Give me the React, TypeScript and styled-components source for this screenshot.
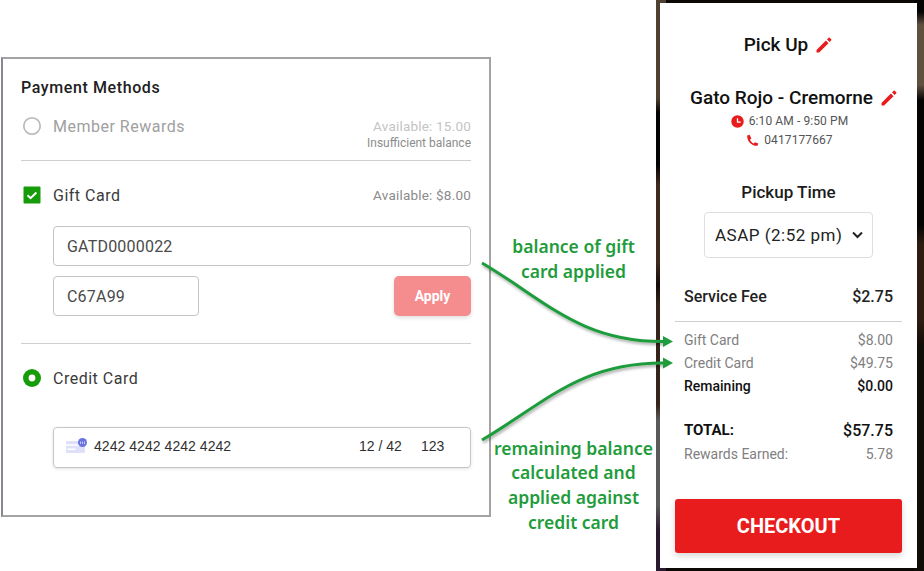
import React from "react";
import styled, { createGlobalStyle } from "styled-components";

const Global = createGlobalStyle`
  html, body { margin: 0; padding: 0; background: #fff; }
  body { font-family: Roboto, "Liberation Sans", sans-serif; width: 924px; height: 571px; overflow: hidden; }
`;
const Page = styled.div`
  position: relative; display: flex; width: 924px; height: 571px; overflow: hidden;
`;
const PaymentPanel = styled.section`
  box-sizing: border-box; width: 490px; height: 460px; margin-top: 57px; margin-left: 1px;
  border: 2px solid #a3a3a3; border-left-color: #8a8590; background: #fff; padding: 18px 18px 0 18px;
  display: flex; flex-direction: column; flex: none;
`;
const PanelTitle = styled.h2`
  margin: 0; font-size: 16px; line-height: 22px; font-weight: 500; color: #212121; letter-spacing: .6px;
`;
const RewardsBlock = styled.div`
  display: flex; justify-content: space-between; align-items: flex-start; height: 51px; margin-top: 10px;
`;
const OptionRow = styled.div<{ $top: number }>`
  display: flex; align-items: center; margin-top: ${p => p.$top}px; height: 34px; gap: 11px; padding-left: 1px;
`;
const OptionMark = styled.span`
  width: 20px; height: 20px; flex: none; display: block;
`;
const OptionLabel = styled.span<{ $muted?: boolean }>`
  font-size: 16px; color: ${p => p.$muted ? "#a0a0a0" : "#3a3a3a"}; letter-spacing: .5px; flex: 1;
`;
const Availability = styled.div`
  display: flex; flex-direction: column; align-items: flex-end; text-align: right; padding-top: 9px;
`;
const Avail = styled.span<{ $muted?: boolean }>`
  font-size: 13.5px; line-height: 16px; color: ${p => p.$muted ? "#c4c4c4" : "#8a8a8a"}; letter-spacing: .2px;
`;
const Note = styled.span`
  font-size: 12px; line-height: 18px; color: #8c8c8c;
`;
const Divider = styled.hr<{ $top: number }>`
  border: 0; border-top: 1px solid #cfcfcf; margin: ${p => p.$top}px 0 0;
`;
const FieldStack = styled.div`
  display: flex; flex-direction: column; gap: 10px; margin: 14px 0 0 32px;
`;
const TextField = styled.div`
  box-sizing: border-box; height: 40px; border: 1px solid #c4c4c4; border-radius: 4px;
  display: flex; align-items: center; padding: 0 13px; font-size: 16px; color: #4a4a4a; letter-spacing: .2px; background: #fff;
`;
const ShortField = styled(TextField)`
  width: 146px;
`;
const CodeRow = styled.div`
  display: flex; justify-content: space-between; align-items: center;
`;
const ApplyButton = styled.button`
  width: 77px; height: 40px; border: 0; border-radius: 5px; background: #f58d8f; color: #fff;
  font: 700 14px Roboto, sans-serif; box-shadow: 0 2px 4px rgba(0,0,0,.12);
`;
const CardField = styled.div`
  box-sizing: border-box; height: 41px; margin: 32px 0 0 32px; border: 1px solid #c6c6c6; border-radius: 4px;
  box-shadow: 0 1px 3px rgba(50,50,93,.14); display: flex; align-items: center; padding: 0 12px 4px;
  font: 14px "Liberation Sans", Arial, sans-serif; color: #303030;
`;
const CardNumber = styled.span`
  margin-left: 7px; flex: 1; letter-spacing: .05px;
`;
const CardExp = styled.span`
  width: 62px;
`;
const CardCvc = styled.span`
  width: 37px;
`;
const Annotations = styled.div`
  width: 165px; flex: none; display: flex; flex-direction: column; align-items: center;
  padding-top: 234px;
`;
const AnnotationText = styled.p<{ $top?: number }>`
  margin: ${p => p.$top ?? 0}px 0 0; width: 165px; text-align: center;
  font: 600 17.5px/24.8px "Noto Sans", "Open Sans", sans-serif; color: #1f9c3c;
`;
const OrderFrame = styled.aside`
  box-sizing: border-box; width: 268px; height: 571px; flex: none; padding: 3px 7px 3px 4px;
  background-color: #0c0806;
  background-repeat: no-repeat;
  background-position: left top, right top;
  background-size: 10px 571px, 10px 571px;
  background-image:
    linear-gradient(180deg, #4f4030 0, #4f4030 98px, #050302 112px, #050302 165px, #3f2a1f 185px, #3f2a1f 262px, #140c08 285px, #35241a 305px, #35241a 405px, #5a5a5a 420px, #5a5a5a 505px, #2a1a30 530px, #2a1a30 571px),
    linear-gradient(180deg, #060403 0, #060403 12px, #5f5040 25px, #5f5040 85px, #060403 100px, #060403 225px, #2e1c10 245px, #2e1c10 320px, #120c08 345px, #120c08 571px);
`;
const OrderCard = styled.div`
  box-sizing: border-box; height: 100%; background: #fff; padding: 0 15px; display: flex; flex-direction: column;
`;
const Heading = styled.div<{ $top: number; $inset?: number }>`
  display: flex; justify-content: center; align-items: center; gap: 7px; margin-top: ${p => p.$top}px;
  padding-left: ${p => p.$inset ?? 0}px;
  font-size: 19px; line-height: 24px; font-weight: 500; color: #111; white-space: nowrap;
`;
const InfoLine = styled.div<{ $top?: number }>`
  display: flex; justify-content: center; align-items: center; gap: 5px; margin-top: ${p => p.$top ?? 0}px;
  padding-left: 2px; font-size: 12px; line-height: 19px; color: #555; letter-spacing: .1px;
`;
const PickupLabel = styled.div`
  margin-top: 31px; text-align: center; font-size: 17px; line-height: 22px; font-weight: 500; color: #1c1c1c;
`;
const PickupSelect = styled.div`
  box-sizing: border-box; align-self: center; width: 169px; height: 46px; margin-top: 9px; border: 1px solid #dedede; border-radius: 4px;
  display: flex; align-items: center; justify-content: space-between; padding: 0 9px 0 10px; font-size: 17px; letter-spacing: .5px; color: #222; white-space: nowrap;
`;
const FeeRow = styled.div`
  display: flex; justify-content: space-between; margin-top: 28px; padding: 0 9px;
  font-size: 16px; line-height: 22px; font-weight: 500; color: #222;
`;
const SummaryDivider = styled.hr`
  border: 0; border-top: 1px solid #cfcfcf; margin: 13px 0 0;
`;
const SummaryRows = styled.div`
  display: flex; flex-direction: column; margin-top: 6px;
`;
const SummaryRow = styled.div<{ $strong?: boolean }>`
  display: flex; justify-content: space-between; padding: 0 9px; height: 23px; align-items: center;
  font-size: 14px; font-weight: ${p => p.$strong ? 500 : 400}; color: ${p => p.$strong ? "#111" : "#808080"};
`;
const TotalRow = styled.div`
  display: flex; justify-content: space-between; padding: 0 9px; margin-top: 21px; height: 24px; align-items: center;
  font-size: 15px; font-weight: 700; color: #111;
`;
const TotalAmount = styled.span`
  font-size: 16px; font-weight: 500;
`;
const EarnedRow = styled(SummaryRow)`
  height: 24px;
`;
const CheckoutButton = styled.button`
  height: 54px; margin-top: 33px; border: 0; border-radius: 3px; background: #e81c1c; color: #fff;
  font: 700 20px Roboto, sans-serif; box-shadow: 0 3px 6px rgba(0,0,0,.16);
`;
const ArrowOverlay = styled.svg`
  position: absolute; left: 0; top: 0; pointer-events: none;
`;

const Pencil = () => (
  <svg width="18" height="18" viewBox="0 0 24 24" fill="#e81c1c"><path d="M2 18.5V22h3.5L18 9.5 14.5 6 2 18.5zM21.7 5.8a1 1 0 0 0 0-1.4l-2.1-2.1a1 1 0 0 0-1.4 0L16 4.5 19.5 8l2.2-2.2z" /></svg>
);
const Clock = () => (
  <svg width="13" height="13" viewBox="0 0 24 24"><circle cx="12" cy="12" r="11.5" fill="#e81c1c" /><path d="M12 6v7h6" fill="none" stroke="#fff" strokeWidth="2.4" /></svg>
);
const Phone = () => (
  <svg width="13" height="13" viewBox="0 0 24 24" fill="#e81c1c"><path d="M6.6 1.5 2.2 2.6C1.5 13.5 10.5 22.5 21.4 21.8l1.1-4.4-5.6-2.4-2.5 2.7c-3-1.4-5.7-4.1-7.1-7.1l2.7-2.5L6.6 1.5z" /></svg>
);
const CardIcon = () => (
  <svg width="21" height="16" viewBox="0 0 21 16"><rect x="0" y="3" width="19" height="12" rx="1" fill="#dfe1fa" /><rect x="0" y="6" width="19" height="2" fill="#f6f6fe" /><rect x="1.5" y="10.5" width="8" height="1.5" fill="#fff" /><circle cx="16.5" cy="4.5" r="4.5" fill="#6a72e0" /><path d="M14.5 3.5v2.5M16.5 3.5v2.5M18.5 3.5v2.5" stroke="#dfe1fa" strokeWidth=".8" /></svg>
);
const EmptyRadio = () => (
  <OptionMark><svg width="20" height="20" viewBox="0 0 20 20"><circle cx="10" cy="10" r="8.2" fill="none" stroke="#bdbdbd" strokeWidth="1.8" /></svg></OptionMark>
);
const CheckedBox = () => (
  <OptionMark><svg width="20" height="20" viewBox="0 0 20 20"><rect x="1.5" y="1.5" width="17" height="17" rx="1" fill="#169c08" /><path d="M5.5 10.2l3.1 3 5.8-5.7" fill="none" stroke="#fff" strokeWidth="2" /></svg></OptionMark>
);
const ActiveRadio = () => (
  <OptionMark><svg width="20" height="20" viewBox="0 0 20 20"><circle cx="10" cy="10" r="9" fill="#169c08" /><circle cx="10" cy="10" r="3.4" fill="#fff" /></svg></OptionMark>
);
const Chevron = () => (
  <svg width="11" height="8" viewBox="0 0 11 8"><path d="M1 1.5l4.5 4.5L10 1.5" fill="none" stroke="#222" strokeWidth="2" /></svg>
);

export default function App() {
  return (
    <Page>
      <Global />
      <PaymentPanel>
        <PanelTitle>Payment Methods</PanelTitle>
        <RewardsBlock>
          <OptionRow $top={0}>
            <EmptyRadio />
            <OptionLabel $muted>Member Rewards</OptionLabel>
          </OptionRow>
          <Availability>
            <Avail $muted>Available: 15.00</Avail>
            <Note>Insufficient balance</Note>
          </Availability>
        </RewardsBlock>
        <Divider $top={0} />
        <OptionRow $top={17}>
          <CheckedBox />
          <OptionLabel>Gift Card</OptionLabel>
          <Avail>Available: $8.00</Avail>
        </OptionRow>
        <FieldStack>
          <TextField>GATD0000022</TextField>
          <CodeRow>
            <ShortField>C67A99</ShortField>
            <ApplyButton>Apply</ApplyButton>
          </CodeRow>
        </FieldStack>
        <Divider $top={27} />
        <OptionRow $top={17}>
          <ActiveRadio />
          <OptionLabel>Credit Card</OptionLabel>
        </OptionRow>
        <CardField>
          <CardIcon />
          <CardNumber>4242 4242 4242 4242</CardNumber>
          <CardExp>12 / 42</CardExp>
          <CardCvc>123</CardCvc>
        </CardField>
      </PaymentPanel>
      <Annotations>
        <AnnotationText>balance of gift<br />card applied</AnnotationText>
        <AnnotationText $top={152}>remaining balance<br />calculated and<br />applied against<br />credit card</AnnotationText>
      </Annotations>
      <OrderFrame>
        <OrderCard>
          <Heading $top={30}>Pick Up <Pencil /></Heading>
          <Heading $top={29} $inset={11}>Gato Rojo - Cremorne <Pencil /></Heading>
          <InfoLine $top={2}><Clock />6:10 AM - 9:50 PM</InfoLine>
          <InfoLine><Phone />0417177667</InfoLine>
          <PickupLabel>Pickup Time</PickupLabel>
          <PickupSelect>ASAP (2:52 pm) <Chevron /></PickupSelect>
          <FeeRow><span>Service Fee</span><span>$2.75</span></FeeRow>
          <SummaryDivider />
          <SummaryRows>
            <SummaryRow><span>Gift Card</span><span>$8.00</span></SummaryRow>
            <SummaryRow><span>Credit Card</span><span>$49.75</span></SummaryRow>
            <SummaryRow $strong><span>Remaining</span><span>$0.00</span></SummaryRow>
          </SummaryRows>
          <TotalRow><span>TOTAL:</span><TotalAmount>$57.75</TotalAmount></TotalRow>
          <EarnedRow><span>Rewards Earned:</span><span>5.78</span></EarnedRow>
          <CheckoutButton>CHECKOUT</CheckoutButton>
        </OrderCard>
      </OrderFrame>
      <ArrowOverlay width="924" height="571" viewBox="0 0 924 571">
        <defs>
          <filter id="arrowShadow" x="-10%" y="-10%" width="120%" height="130%">
            <feDropShadow dx="1" dy="2" stdDeviation="1.5" floodColor="#000" floodOpacity=".35" />
          </filter>
        </defs>
        <g filter="url(#arrowShadow)" fill="none" stroke="#1f9c3c" strokeWidth="3">
          <path d="M482 263C545 300 580 342 664 341.5" />
          <path d="M482 440C545 403 580 362.5 664 363" />
        </g>
        <path d="M663 336L673 341.5L663 347Z" fill="#1f9c3c" />
        <path d="M663 357.5L673 363L663 368.5Z" fill="#1f9c3c" />
      </ArrowOverlay>
    </Page>
  );
}
